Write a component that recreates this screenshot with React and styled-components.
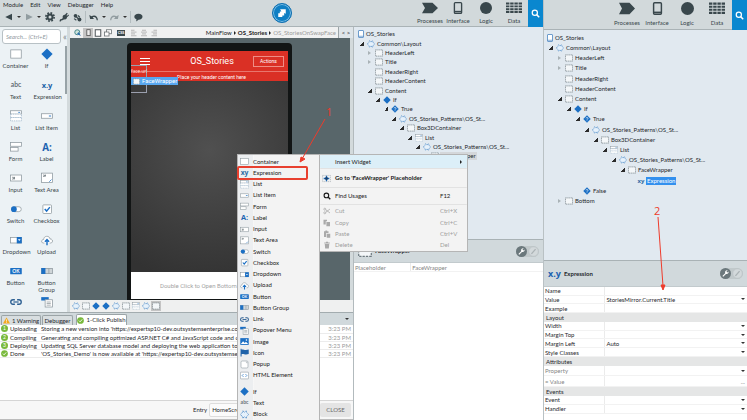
import React from "react";
import styled, { createGlobalStyle, css } from "styled-components";

const GlobalStyle = createGlobalStyle`
  * {
    box-sizing: border-box;
  }
  body {
    margin: 0;
    overflow: hidden;
    font-family: Lato, "Open Sans", sans-serif;
    font-size: 6px;
    line-height: 8px;
    color: #1f282c;
    background-color: #ffffff;
  }
  ul {
    list-style: none;
    margin: 0;
    padding: 0;
  }
  button, input, select {
    font: inherit;
    color: inherit;
    border: 0;
    margin: 0;
    padding: 0;
    background: none;
    border-radius: 0;
    min-width: 0;
  }
  button {
    cursor: pointer;
  }
  svg {
    display: block;
    flex: none;
  }
`;

/* ---------- icons ---------- */

const blue = "#1b6fc4";
const grey = "#8d989e";
const box = { fill: "#fff", stroke: grey, strokeWidth: 1 };

const shapes = {
  container: <rect x="1" y="2.5" width="14" height="11" {...box} />,
  placeholder: (
    <rect x="0.8" y="1.8" width="14.4" height="12.4" fill="#f4f7f9" stroke="#6d797f" strokeWidth="1.4" strokeDasharray="2.6 1.2" />
  ),
  if: <path d="M8 0.5L15.5 8L8 15.5L0.5 8Z" fill={blue} />,
  branch: (
    <>
      <path d="M8 0.5L15.5 8L8 15.5L0.5 8Z" fill={blue} />
      <path d="M6 6.5C6 4.5 10 4.5 10 6.5C10 8 8 8 8 9.5M8 11V12.3" fill="none" stroke="#fff" strokeWidth="1.3" />
    </>
  ),
  text: <text x="8" y="11" textAnchor="middle" fontSize="9" fontWeight="600" fill="#59656b">abc</text>,
  expression: <text x="8" y="11.5" textAnchor="middle" fontFamily="Open Sans" fontSize="10" fontWeight="700" fill="#2264a8">x.y</text>,
  exprSmall: <text x="8" y="12" textAnchor="middle" fontFamily="Open Sans" fontSize="12" fontWeight="700" fill="#2f6da6">xy</text>,
  list: (
    <>
      <rect x="0.8" y="1" width="14.4" height="4.5" {...box} />
      <rect x="0.8" y="5.5" width="14.4" height="4.5" {...box} stroke="#9fb6c9" strokeDasharray="2 1" />
      <rect x="0.8" y="10" width="14.4" height="4.5" {...box} stroke="#9fb6c9" strokeDasharray="2 1" />
      <path d="M11 3.2h2.5" stroke={blue} />
    </>
  ),
  listItem: (
    <>
      <rect x="0.8" y="5" width="14.4" height="6" {...box} />
      <path d="M10.5 8h3" stroke={blue} strokeWidth="1.2" />
    </>
  ),
  form: (
    <>
      <rect x="0.8" y="2" width="14.4" height="5" {...box} />
      <rect x="0.8" y="8.5" width="10" height="5" {...box} />
    </>
  ),
  label: <text x="8" y="13" textAnchor="middle" fontFamily="Open Sans" fontSize="13" fontWeight="700" fill="#1b62b0">A:</text>,
  input: (
    <>
      <rect x="0.8" y="4" width="14.4" height="8" {...box} />
      <path d="M3 9.5h1.5V7H3M6 9.8V6.5" fill="none" stroke="#59656b" />
    </>
  ),
  textArea: (
    <>
      <rect x="0.8" y="1.5" width="14.4" height="12.5" {...box} />
      <path d="M3 6h1.5V4H3M6 6V3.5" fill="none" stroke="#59656b" />
      <path d="M11 13l3-3" stroke={blue} />
    </>
  ),
  switch: (
    <>
      <rect x="2.5" y="5" width="12.5" height="6.5" rx="3.2" {...box} />
      <circle cx="5.2" cy="8.2" r="3.8" fill={blue} />
    </>
  ),
  checkbox: (
    <>
      <rect x="2.5" y="2.5" width="11.5" height="11.5" rx="1" {...box} />
      <path d="M5 8l2.5 2.8L11.8 5.5" fill="none" stroke={blue} strokeWidth="2" />
    </>
  ),
  dropdown: (
    <>
      <rect x="0.8" y="4.5" width="14.4" height="7.5" {...box} />
      <rect x="9" y="4" width="6.7" height="8.5" fill={blue} />
      <path d="M10.6 7h3.5l-1.7 2.3z" fill="#fff" />
    </>
  ),
  upload: (
    <>
      <path d="M4.5 12H3.2C-.2 12 .2 7.3 3.6 7.3C3.6 1.8 11.6 1.8 12 6.6C16.3 6.4 16.4 12 12.8 12H11.5" fill="#fff" stroke={grey} />
      <path d="M8 15V8M5.2 10.4L8 7.4L10.8 10.4" fill="none" stroke={blue} strokeWidth="1.9" />
    </>
  ),
  button: (
    <>
      <rect x="0.3" y="4" width="15.4" height="8.3" rx="0.8" fill={blue} />
      <text x="8" y="10.6" textAnchor="middle" fontSize="6.5" fontWeight="700" fill="#fff">OK</text>
    </>
  ),
  buttonGroup: (
    <>
      <rect x="0.8" y="4.5" width="14.4" height="7" fill="#cfd5d8" stroke={grey} />
      <rect x="0.4" y="4" width="5.5" height="8" fill={blue} />
      <path d="M10.5 4.5v7" stroke={grey} />
    </>
  ),
  link: (
    <>
      <path d="M6.5 11H4C0 11 0 5 4 5H6.5M9.5 5H12C16 5 16 11 12 11H9.5" fill="none" stroke="#2d5f92" strokeWidth="1.8" />
      <path d="M4.5 8h7" stroke="#2d5f92" strokeWidth="1.6" />
    </>
  ),
  popover: (
    <>
      <rect x="0.3" y="1.5" width="10" height="4.5" fill={blue} />
      <rect x="5.5" y="5" width="9.7" height="9.7" {...box} />
      <path d="M7.5 8h5.5M7.5 10h5.5M7.5 12.2h5.5" stroke={grey} />
    </>
  ),
  image: (
    <>
      <rect x="0.5" y="2" width="15" height="12" fill={blue} />
      <path d="M1.5 12.5L5.5 7.5L8.5 10.5L10.5 8.5L14.5 12.5Z" fill="#fff" />
      <circle cx="11.5" cy="5.3" r="1.4" fill="#fff" />
    </>
  ),
  flag: <path d="M1 1.5h1.8V3C5.5 1.5 7.5 4.8 15.5 2.8V10.8C8.5 13 6.5 9.5 2.8 11V15H1Z" fill="#1f63aa" />,
  popup: (
    <>
      <rect x="1.8" y="1.8" width="12.4" height="12.4" rx="2" {...box} />
      <path d="M10.5 3.8h2v2" fill="none" stroke={grey} />
    </>
  ),
  html: (
    <>
      <rect x="0.8" y="2" width="14.4" height="12" rx="1" {...box} />
      <path d="M6.3 5.5L3.8 8L6.3 10.5M9.7 5.5L12.2 8L9.7 10.5" fill="none" stroke={blue} strokeWidth="1.2" />
    </>
  ),
  block: (
    <path
      d="M5 1.5L8 4L11 1.5L12 4.5L15.3 8L12 11.5L11 14.5L8 12L5 14.5L4 11.5L0.7 8L4 4.5Z"
      fill="#e6f1fb" stroke="#3f82c4" strokeWidth="1.4" strokeDasharray="2.6 1"
    />
  ),
  screen: (
    <>
      <rect x="3" y="1" width="10" height="14" rx="1" fill="#fff" stroke="#4d87c2" strokeWidth="1.6" />
      <path d="M3.5 12.5h9" stroke="#4d87c2" strokeWidth="1.4" />
    </>
  ),
  goTo: (
    <>
      <rect x="1" y="2.5" width="14" height="11" fill="none" stroke={grey} strokeDasharray="2 1.4" />
      <path d="M8 3v10M3 8h10" stroke={blue} strokeWidth="2.4" />
      <path d="M8 4.5L11.5 8L8 11.5L4.5 8Z" fill="#17406f" />
    </>
  ),
  search: (
    <>
      <circle cx="6.8" cy="6.8" r="4.6" fill="none" stroke="currentColor" strokeWidth="2.2" />
      <path d="M10 10l4.6 4.6" stroke="currentColor" strokeWidth="2.6" />
    </>
  ),
  cut: (
    <>
      <path d="M5.5 5.5L14 12M5.5 10.5L14 4" stroke="#a9a9a9" strokeWidth="1.6" />
      <circle cx="3.6" cy="4.4" r="2" fill="none" stroke="#a9a9a9" strokeWidth="1.5" />
      <circle cx="3.6" cy="11.6" r="2" fill="none" stroke="#a9a9a9" strokeWidth="1.5" />
    </>
  ),
  copy: <path d="M1 1.5h7v3H5.5V11H1ZM6.8 6H14V14.5H6.8Z" fill="#a9a9a9" />,
  paste: <path d="M2 2.5h2.8V1h3.5V2.5H11V6H6.3V14H2ZM7.6 7.3H14.5V15.3H7.6Z" fill="#a9a9a9" />,
  trash: <path d="M2.5 3H6V1.3h4V3h3.5v1.8h-11ZM3.5 6h9l-.8 9.2H4.3Z" fill="#a9a9a9" />,
  back: <path d="M14 1.5V14.5L0.5 8Z" fill="currentColor" />,
  forward: <path d="M2 1.5V14.5L15.5 8Z" fill="currentColor" />,
  gear: (
    <>
      <circle cx="8" cy="8" r="6.6" fill="none" stroke="currentColor" strokeWidth="2.6" strokeDasharray="2.8 2.38" />
      <circle cx="8" cy="8" r="4" fill="none" stroke="currentColor" strokeWidth="3.2" />
    </>
  ),
  plug: <path d="M1 15C1 9 5 13 6 9C5 6 8 4 9.5 4.5L12.5 1L14 2.3L12 5L13 6L15.2 4L16 5.5L12.8 8.5C13 11 10.5 12.5 8 11.5C6 14.5 3.5 12 2.8 15Z" fill="currentColor" />,
  connect: (
    <>
      <circle cx="4.5" cy="5" r="3.3" fill="currentColor" />
      <circle cx="11.5" cy="11.5" r="3.5" fill="currentColor" />
      <path d="M4.5 5L11 12M9 4.5l3 3M2 10l4 3" stroke="currentColor" strokeWidth="2.2" />
    </>
  ),
  undo: <path d="M0.5 3.5L2 10.5H9L6.6 8C9.5 6.3 13 7.5 13.7 13H15.8C15.8 5 9.5 2.4 4.4 5.8Z" fill="currentColor" />,
  redo: <path d="M15.5 3.5L14 10.5H7L9.4 8C6.5 6.3 3 7.5 2.3 13H0.2C0.2 5 6.5 2.4 11.6 5.8Z" fill="currentColor" />,
  comment: <path d="M8 1.5C17.5 1.5 17.5 11.8 8 11.8L4 15.2L4.3 11.2C-2 8.5 0 1.5 8 1.5Z" fill="currentColor" />,
  zoomScreen: (
    <>
      <circle cx="6.5" cy="6.5" r="5" fill="#cfe4da" stroke="#3d7f83" strokeWidth="1.8" />
      <path d="M6 10l3-4 5 8" fill="#2f6fb0" />
    </>
  ),
  phoneSmall: <rect x="5" y="3" width="6" height="10.5" fill="#eee" stroke="#555" strokeWidth="1.5" />,
  tablet: <rect x="2.5" y="1.5" width="11" height="13" fill="#fff" stroke="#4f5659" strokeWidth="2" />,
  devices: (
    <>
      <rect x="5" y="1.5" width="10" height="8" fill="#fff" stroke="#62696c" strokeWidth="1.5" />
      <rect x="1" y="6" width="9" height="8" fill="#fff" stroke="#62696c" strokeWidth="1.5" />
    </>
  ),
  css: (
    <>
      <rect x="0" y="2" width="16" height="12" fill="#3c4a4e" />
      <text x="8" y="10.8" textAnchor="middle" fontSize="7.5" fontWeight="700" fill="#fff">CSS</text>
    </>
  ),
  alignLeft: <path d="M2 2.5h7M2 6.2h11M2 9.8h8M2 13.5h11" stroke="#a8a8a8" strokeWidth="1.6" />,
  alignCenter: <path d="M4 2.5h8M2 6.2h12M4 9.8h8M2 13.5h12" stroke="#a8a8a8" strokeWidth="1.6" />,
  alignRight: <path d="M7 2.5h7M3 6.2h11M6 9.8h8M3 13.5h11" stroke="#a8a8a8" strokeWidth="1.6" />,
  warning: (
    <>
      <path d="M8 1L16 15H0Z" fill="#f3a81c" />
      <path d="M8 5.5v5M8 12v1.6" stroke="#fff" strokeWidth="1.6" />
    </>
  ),
  done: (
    <>
      <circle cx="8" cy="8" r="7.7" fill="#79b93c" />
      <path d="M4.3 8.2l2.8 2.8L11.8 5.5" fill="none" stroke="#fff" strokeWidth="2" />
    </>
  ),
  processes: <path d="M0 1H10.5L16 8L10.5 15H0L3 8Z" fill="currentColor" />,
  interface: (
    <>
      <rect x="3.2" y="0.9" width="9.6" height="14.2" rx="1.2" fill="none" stroke="currentColor" strokeWidth="1.8" />
      <path d="M3.5 12.8h9" stroke="currentColor" strokeWidth="2" />
    </>
  ),
  logic: <circle cx="8" cy="8" r="8" fill="currentColor" />,
  data: <path d="M0 2h16M0 5.8h16M0 9.6h16M0 13.4h16" stroke="currentColor" strokeWidth="2.6" strokeDasharray="3.4 0.8" />,
};

const Icon = ({ name, size = 9, wide }) => (
  <svg
    width={wide || size}
    height={size}
    viewBox="0 0 16 16"
    preserveAspectRatio={wide ? "none" : undefined}
    aria-hidden="true"
  >
    {shapes[name]}
  </svg>
);

/* ---------- page ---------- */

const Page = styled.div`
  position: relative;
  display: grid;
  grid-template-columns: minmax(0, 543fr) minmax(0, 204fr);
  height: 100vh;
  overflow: hidden;
`;

const Window = styled.section`
  display: flex;
  flex-direction: column;
  min-width: 0;
  min-height: 0;
`;

const Header = styled.header`
  display: flex;
  justify-content: space-between;
  height: ${(props) => (props.$large ? 30 : 27)}px;
  flex: none;
  background-color: #d2d9db;
  border-bottom: 1px solid #aab3b6;
  ${(props) => props.$large && css`
    justify-content: flex-end;
    border-left: 1px solid #b9c1c4;
  `}
`;

const Commands = styled.div`
  flex: 0 0 50%;
  display: flex;
  flex-direction: column;
`;

const MenuBar = styled.nav`
  display: flex;
  gap: 7px;
  padding-left: 3px;
  height: 8px;
  line-height: 7px;
`;

const ToolBar = styled.div`
  display: flex;
  align-items: center;
  flex: 1;
  gap: 4px;
  padding-left: 5px;
  color: #39474c;
`;

const ToolButton = styled.button`
  display: flex;
  align-items: center;
  color: ${(props) => (props.$dim ? "#929da1" : "#39474c")};
`;

const Caret = styled.span`
  flex: none;
  border: 2px solid transparent;
  border-top-color: #333;
  border-bottom-width: 0;
`;

const Divider = styled.span`
  width: 1px;
  height: 12px;
  margin: 0 -1px;
  background-color: #b4bdc0;
`;

const Publish = styled.button`
  align-self: center;
  display: flex;
  align-items: center;
  justify-content: center;
  width: 20px;
  height: 20px;
  border-radius: 50%;
  border: 1px solid #0f6fb0;
  background-color: #0f7fc4;
  box-shadow: inset 0 0 0 1px #7fc0e6;
`;

const Modules = styled.nav`
  flex: ${(props) => (props.$large ? "none" : "1 1 0")};
  display: flex;
  justify-content: flex-end;
`;

const ModuleTab = styled.button`
  display: flex;
  flex-direction: column;
  align-items: center;
  justify-content: flex-start;
  width: ${(props) => (props.$large ? 30 : 28)}px;
  padding-top: 2px;
  gap: ${(props) => (props.$large ? 4 : 3)}px;
  color: #39474c;
  white-space: nowrap;
`;

const SearchTab = styled.button`
  display: flex;
  align-items: center;
  justify-content: center;
  width: 15px;
  margin-bottom: -1px;
  color: #fff;
  background-color: #0a87cf;
`;

const Columns = styled.div`
  display: flex;
  flex: 1;
  min-height: 0;
`;

const Main = styled.main`
  display: flex;
  flex-direction: column;
  flex: 1;
  min-width: 0;
  border-right: 1px solid #b2babd;
`;

const Workspace = styled.div`
  display: flex;
  flex: 1;
  min-height: 0;
`;

/* ---------- toolbox ---------- */

const Toolbox = styled.aside`
  width: 70px;
  flex: none;
  overflow: hidden;
  background-color: #ecf2f5;
  border-right: 3px solid #d3dadc;
`;

const SearchRow = styled.div`
  display: flex;
  align-items: center;
  gap: 2px;
  padding: 2px 0 0 2px;
`;

const SearchInput = styled.input`
  width: 59px;
  height: 15px;
  padding: 0 3px;
  border: 1px solid #b8c1c5;
  border-radius: 3px;
  background-color: #fff;
  font-style: italic;
  &::placeholder {
    color: #8f999d;
  }
`;

const Collapse = styled.button`
  font-size: 9px;
  color: #7d878b;
`;

const WidgetArea = styled.div`
  display: flex;
  align-items: flex-start;
  padding-top: 2px;
`;

const WidgetGrid = styled.ul`
  display: grid;
  grid-template-columns: 31px 31px;
  grid-auto-rows: 31px;
  width: 65px;
`;

const Widget = styled.button`
  display: flex;
  flex-direction: column;
  align-items: center;
  gap: 1px;
  width: 100%;
  padding-top: 2px;
  line-height: 7px;
  white-space: ${(props) => (props.$wrap ? "normal" : "nowrap")};
  color: #3a464b;
  svg {
    margin-bottom: 1px;
  }
`;

const WidgetName = styled.span`
  max-width: 26px;
`;

const ScrollThumb = styled.div`
  width: 2px;
  height: 48px;
  background-color: #98a3a7;
`;

/* ---------- canvas ---------- */

const Editor = styled.div`
  display: flex;
  flex-direction: column;
  flex: 1;
  min-width: 0;
  background-color: #d3dadc;
`;

const EditorBar = styled.div`
  display: flex;
  align-items: center;
  height: 11px;
  flex: none;
  background-color: #f0f1f1;
`;

const EditorTool = styled.button`
  display: flex;
  align-items: center;
  justify-content: center;
  width: 10px;
  height: 10px;
  background-color: ${(props) => (props.$active ? "#c4c4c4" : "transparent")};
`;

const Gap = styled.span`
  width: 3px;
`;

const Crumbs = styled.nav`
  display: flex;
  align-items: center;
  justify-content: flex-end;
  gap: 2px;
  flex: 1;
  padding-right: 2px;
  white-space: nowrap;
`;

const Crumb = styled.a`
  color: ${(props) => (props.$dim ? "#9c9c9c" : "#222")};
  font-weight: ${(props) => (props.$current ? 700 : 400)};
  text-decoration: none;
`;

const CrumbArrow = styled.span`
  border: 2px solid transparent;
  border-left-color: #222;
  border-right-width: 0;
`;

const CodeTab = styled.button`
  align-self: stretch;
  width: 15px;
  border-left: 1px solid #9ca5a8;
  background-color: #dfe5e9;
`;

const Canvas = styled.div`
  flex: 1;
  min-height: 0;
  margin-right: 3px;
  padding: 5px 0 0 57px;
  background-color: #58666a;
`;

const Phone = styled.div`
  display: flex;
  width: 165px;
  height: 100%;
  padding: 8px 4px 1px;
  border-radius: 4px 4px 0 0;
  background-color: #121515;
`;

const Screen = styled.div`
  position: relative;
  display: flex;
  flex-direction: column;
  flex: 1;
  background: radial-gradient(circle at 50% 40%, #505050, #323232 80%);
`;

const AppHeader = styled.div`
  display: grid;
  grid-template-columns: 1fr auto 1fr;
  align-items: center;
  height: 20px;
  padding: 0 4px 0 9px;
  color: #fff;
  background-color: #da3025;
`;

const AppTitle = styled.h1`
  margin: 0;
  font-family: Roboto, sans-serif;
  font-size: 9px;
  line-height: 10px;
  font-weight: 400;
`;

const Hamburger = styled.button`
  width: 10px;
  height: 7px;
  border: solid #fff;
  border-width: 1px 0;
  background: linear-gradient(#fff, #fff) center / 100% 1px no-repeat;
`;

const ActionsButton = styled.button`
  justify-self: end;
  width: 31px;
  height: 11px;
  border: 1px solid #ee8d85;
  font-family: Roboto, sans-serif;
  font-size: 5px;
`;

const AppSubheader = styled.div`
  height: 10px;
  padding-left: 4px;
  border-top: 1px solid #e8766d;
  font-family: Roboto, sans-serif;
  font-size: 5px;
  line-height: 10px;
  text-align: center;
  color: #fff;
  background-color: #da3025;
`;

const AppBottom = styled.div`
  margin-top: auto;
  padding-left: 29px;
  height: 27px;
  line-height: 27px;
  white-space: nowrap;
  overflow: hidden;
  font-family: Roboto, sans-serif;
  color: #a3a3a3;
  background-color: #fff;
`;

/* selection frame drawn over the phone screen */
const Selection = styled.div`
  position: absolute;
  left: 0;
  top: 14px;
  width: 16px;
  height: 28px;
  border: 1px solid #9b9fae;
  border-left: 0;
  padding-top: 2px;
  font-size: 5px;
  line-height: 6px;
  white-space: nowrap;
  color: #fbd9d6;
`;

const SelectionTag = styled.div`
  position: absolute;
  left: 0;
  top: 26px;
  display: flex;
  align-items: center;
  gap: 2px;
  height: 8px;
  padding: 0 1px 0 2px;
  font-family: Roboto, sans-serif;
  color: #fff;
  background-color: #58a6ef;
`;

const PathBar = styled.div`
  display: flex;
  align-items: center;
  height: 12px;
  flex: none;
  padding-left: 1px;
  background-color: #eff0f0;
`;

/* ---------- publish panel ---------- */

const Output = styled.section`
  display: flex;
  flex-direction: column;
  height: 108px;
  flex: none;
  border-bottom: 1px solid #bcbcbc;
`;

const Tabs = styled.div`
  display: flex;
  align-items: flex-end;
  gap: 1px;
  height: 13px;
  flex: none;
  padding: 0 4px 0 1px;
  border-top: 1px solid #a3acaf;
  background-color: #d1d9dc;
`;

const Tab = styled.button`
  display: flex;
  align-items: center;
  justify-content: center;
  gap: 2px;
  width: ${(props) => props.$width}px;
  height: ${(props) => (props.$active ? 11 : 10)}px;
  border: 1px solid #9ba4a7;
  border-bottom: 0;
  border-radius: 2px 2px 0 0;
  margin-left: ${(props) => (props.$active ? 2 : 0)}px;
  white-space: nowrap;
  background-color: ${(props) => (props.$active ? "#fff" : "#d8dee0")};
`;

const TabsMenu = styled.button`
  display: flex;
  align-self: center;
  margin-left: auto;
`;

const LogTable = styled.table`
  table-layout: fixed;
  width: 100%;
  border-collapse: collapse;
  background-color: #fff;
  tr {
    height: 8px;
  }
  td {
    padding: 0;
    line-height: 7px;
    white-space: nowrap;
    overflow: hidden;
    border-bottom: 1px solid #ececec;
  }
`;

const Step = styled.span`
  display: flex;
  align-items: center;
  gap: 2px;
  padding-left: 1px;
`;

const Bullet = styled.span`
  width: 7px;
  height: 7px;
  border-radius: 50%;
  font-size: 5px;
  line-height: 7px;
  text-align: center;
  color: #fff;
  background-color: #79b93c;
`;

const Time = styled.td`
  text-align: right;
  padding-right: 2px !important;
  color: #9b9b9b;
`;

const Footer = styled.footer`
  display: flex;
  align-items: center;
  gap: 2px;
  height: 19px;
  margin-top: auto;
  padding: 0 2px 0 193px;
  border-top: 1px solid #d5d5d5;
  background-color: #f7f7f7;
`;

const EntrySelect = styled.select`
  appearance: none;
  flex: 1;
  height: 14px;
  padding-left: 2px;
  border: 1px solid #dddddd;
  border-radius: 2px;
  background-color: #fbfbfb;
`;

const CloseButton = styled.button`
  width: 31px;
  height: 14px;
  border-radius: 2px;
  color: #6b6b6b;
  background-color: #e4e4e4;
`;

/* ---------- element tree ---------- */

const Side = styled.aside`
  display: flex;
  flex-direction: column;
  width: ${(props) => (props.$large ? "100%" : "189px")};
  flex: none;
  border-left: ${(props) => (props.$large ? "1px solid #b9c1c4" : "0")};
`;

const TreePane = styled.div`
  flex: ${(props) => (props.$large ? "0 0 230px" : "0 0 212px")};
  padding: ${(props) => (props.$large ? "4px 0 0 2px" : "3px 0 0 3px")};
  background-color: #e1e9f0;
`;

const TreeTitle = styled.div`
  display: flex;
  align-items: center;
  gap: 1px;
`;

const Tree = styled.ul`
  display: flex;
  flex-direction: column;
  min-height: ${(props) => props.$height}px;
  margin-top: 1px;
`;

const TreeItem = styled.li`
  display: flex;
  align-items: center;
  flex: 1;
  gap: 1px;
  padding-left: ${(props) => props.$depth * (props.$large ? 9 : 8) + 3}px;
  white-space: nowrap;
`;

const Twisty = styled.span`
  display: block;
  width: 4px;
  height: 4px;
  margin-right: 2px;
  ${(props) => props.$state === "open" && css`
    background: linear-gradient(135deg, transparent 50%, #2b2b2b 50%);
  `}
  ${(props) => props.$state === "closed" && css`
    width: 0;
    height: 0;
    margin-right: 3px;
    border: 2px solid transparent;
    border-left: 3px solid #a9b2b6;
    border-right: 0;
  `}
`;

const Node = styled.span`
  padding: 0 1px;
  background-color: ${(props) => props.$mark || "transparent"};
  color: ${(props) => (props.$mark === "#3390ee" ? "#fff" : "inherit")};
`;

/* ---------- properties ---------- */

const PropHeader = styled.div`
  display: flex;
  align-items: center;
  gap: 3px;
  height: ${(props) => (props.$large ? 27 : 24)}px;
  flex: none;
  padding: 0 4px;
  border-top: 1px solid #a9b2b5;
  border-bottom: 1px solid #c2cacd;
  font-weight: 700;
  background-color: #d1d9dc;
`;

const ExprMark = styled.span`
  font-family: "Open Sans", sans-serif;
  font-size: 9px;
  line-height: 12px;
  font-weight: 700;
  color: #1b62b0;
`;

const Toggle = styled.button`
  display: flex;
  align-items: center;
  justify-content: space-between;
  width: 23px;
  height: 11px;
  margin-left: auto;
  border-radius: 6px;
  background-color: #c1c9cb;
`;

const PropTable = styled.table`
  table-layout: fixed;
  width: 100%;
  height: ${(props) => props.$height}px;
  border-collapse: collapse;
  background-color: #fff;
  color: ${(props) => (props.$dim ? "#858585" : "inherit")};
  th, td {
    padding: 0 1px;
    line-height: 7px;
    text-align: left;
    font-weight: 400;
    white-space: nowrap;
    border-bottom: 1px solid #f2f2f2;
  }
  th {
    border-right: 1px solid #ebebeb;
  }
`;

const PropGroup = styled.h2`
  margin: 0;
  padding-left: 2px;
  height: 9px;
  font-size: 6px;
  line-height: 9px;
  font-weight: 400;
  background-color: #e5e6e6;
`;

const Field = styled.div`
  display: flex;
  align-items: center;
  gap: 2px;
  padding-right: 1px;
  input {
    flex: 1;
    height: 7px;
    line-height: 7px;
  }
  button {
    display: flex;
    align-items: center;
    height: 7px;
  }
`;

/* ---------- menus over the page ---------- */

const Popup = styled.div`
  position: absolute;
  display: flex;
  flex-direction: column;
  border: 1px solid #b5b5b5;
  background-color: #f3f3f3;
`;

const WidgetMenu = styled(Popup)`
  left: 237px;
  top: 154px;
  width: 83px;
  bottom: 0;
  padding-top: 1px;
  border-bottom: 0;
  background: linear-gradient(to right, #eceef0 15px, #fafafa 15px, #f3f3f3 16px);
`;

const MenuGroup = styled.ul`
  display: flex;
  flex-direction: column;
  height: ${(props) => props.$height}px;
  flex: none;
  margin-bottom: ${(props) => props.$after || 0}px;
  li {
    display: flex;
    flex: 1;
    min-height: 0;
  }
`;

const MenuItem = styled.button`
  display: flex;
  align-items: center;
  flex: 1;
  gap: 4px;
  padding: 0 10px 0 2px;
  text-align: left;
  white-space: nowrap;
  font-weight: ${(props) => (props.$bold ? 700 : 400)};
  color: ${(props) => (props.disabled ? "#9d9d9d" : "#1a1a1a")};
  outline: ${(props) => (props.$boxed ? "2px solid #e8402f" : "0")};
  outline-offset: -1px;
  margin-right: ${(props) => (props.$boxed ? 12 : 0)}px;
  border-radius: 1px;
`;

const ContextMenu = styled(Popup)`
  left: 319px;
  top: 154px;
  width: 149px;
  padding-bottom: 1px;
`;

const ContextRow = styled(MenuItem)`
  flex: none;
  width: 100%;
  height: ${(props) => props.$height || 11}px;
  gap: 4px;
  padding: 0 5px 0 2px;
  border-top: ${(props) => (props.$line ? "1px solid #e2e2e2" : "0")};
  background-color: ${(props) => (props.$hot ? "#dceff8" : "transparent")};
`;

const Shortcut = styled.span`
  width: 22px;
  margin-left: auto;
`;

const IconSlot = styled.span`
  display: flex;
  justify-content: center;
  width: 9px;
`;

const MenuArrow = styled(CrumbArrow)`
  margin-left: auto;
`;

const Notes = styled.svg`
  position: absolute;
  left: 0;
  top: 0;
  pointer-events: none;
`;

/* ---------- data ---------- */

const widgets = [
  ["container", "Container"],
  ["if", "If"],
  ["text", "Text"],
  ["expression", "Expression"],
  ["list", "List"],
  ["listItem", "List Item"],
  ["form", "Form"],
  ["label", "Label"],
  ["input", "Input"],
  ["textArea", "Text Area"],
  ["switch", "Switch"],
  ["checkbox", "Checkbox"],
  ["dropdown", "Dropdown"],
  ["upload", "Upload"],
  ["button", "Button"],
  ["buttonGroup", "Button Group"],
  ["link", "Link"],
  ["popover", "Popover Menu"],
];

const insertItems = [
  ["container", "Container"],
  ["exprSmall", "Expression"],
  ["list", "List"],
  ["listItem", "List Item"],
  ["form", "Form"],
  ["label", "Label"],
  ["input", "Input"],
  ["textArea", "Text Area"],
  ["switch", "Switch"],
  ["checkbox", "Checkbox"],
  ["dropdown", "Dropdown"],
  ["upload", "Upload"],
  ["button", "Button"],
  ["buttonGroup", "Button Group"],
  ["link", "Link"],
  ["popover", "Popover Menu"],
  ["image", "Image"],
  ["flag", "Icon"],
  ["popup", "Popup"],
  ["html", "HTML Element"],
];

const logicItems = [
  ["if", "If"],
  ["text", "Text"],
  ["block", "Block"],
];

const tree = [
  [0, "open", "block", "Common\\Layout"],
  [1, "closed", "placeholder", "HeaderLeft"],
  [1, "closed", "placeholder", "Title"],
  [1, "", "placeholder", "HeaderRight"],
  [1, "", "placeholder", "HeaderContent"],
  [1, "open", "placeholder", "Content"],
  [2, "open", "if", "If"],
  [3, "open", "branch", "True"],
  [4, "open", "block", "OS_Stories_Patterns\\OS_St..."],
  [5, "open", "placeholder", "Box3DContainer"],
  [6, "open", "list", "List"],
  [7, "open", "block", "OS_Stories_Patterns\\OS_St..."],
];

const smallTree = [...tree, [8, "", "placeholder", "FaceWrapper", "#d4d7da"]];

const largeTree = [
  ...tree,
  [8, "open", "placeholder", "FaceWrapper"],
  [9, "", "exprSmall", "Expression", "#3390ee"],
  [3, "", "branch", "False"],
  [1, "closed", "placeholder", "Bottom"],
];

const log = [
  ["1", "Uploading", "Storing a new version into 'https://expertsp10-dev.outsystemsenterprise.com/S"],
  ["2", "Compiling", "Generating and compiling optimized ASP.NET C# and JavaScript code and creat"],
  ["3", "Deploying", "Updating SQL Server database model and deploying the web application to IIS."],
  ["", "Done", "'OS_Stories_Demo' is now available at 'https://expertsp10-dev.outsystemsenterp"],
];

const pathIcons = ["block", "placeholder", "if", "if", "block", "placeholder", "list", "block", "placeholder"];

/* ---------- components ---------- */

const ModuleTabs = ({ large }) => (
  <Modules $large={large}>
    {["Processes", "Interface", "Logic", "Data"].map((name) => (
      <ModuleTab key={name} $large={large}>
        <Icon
          name={name.toLowerCase()}
          size={large ? 13 : 12}
          wide={name === "Processes" || name === "Data" ? 16 : large ? 13 : 12}
        />
        {name}
      </ModuleTab>
    ))}
    <SearchTab aria-label="Search">
      <Icon name="search" size={9} />
    </SearchTab>
  </Modules>
);

const ElementTree = ({ nodes, height, large }) => (
  <TreePane $large={large}>
    <TreeTitle>
      <Icon name="screen" size={8} />
      OS_Stories
    </TreeTitle>
    <Tree $height={height}>
      {nodes.map(([depth, state, icon, name, mark], i) => (
        <TreeItem key={i} $depth={depth} $large={large}>
          <Twisty $state={state} />
          <Icon name={icon} size={8} />
          <Node $mark={mark}>{name}</Node>
        </TreeItem>
      ))}
    </Tree>
  </TreePane>
);

const WrenchToggle = () => (
  <Toggle aria-label="Styles">
    <svg width="11" height="11" viewBox="0 0 16 16" aria-hidden="true">
      <circle cx="8" cy="8" r="8" fill="#6b787c" />
      <path d="M3.5 11.5L7.5 7.5C6.8 5 8.8 3 11 3.5L9.3 5.3L10.7 6.7L12.5 5C13 7.2 11 9.2 8.7 8.6L4.7 12.7Z" fill="#fff" />
    </svg>
    <svg width="11" height="11" viewBox="0 0 16 16" aria-hidden="true">
      <circle cx="8" cy="8" r="7" fill="#d3d9db" stroke="#b9c1c3" />
      <path d="M5 11.5L11 4.5" stroke="#aab2b5" strokeWidth="1.8" />
    </svg>
  </Toggle>
);

const PropRows = ({ rows, height, dim }) => (
  <PropTable $height={height} $dim={dim}>
    <colgroup>
      <col width="30%" />
      <col />
    </colgroup>
    <tbody>
      {rows.map(([name, value, more]) => (
        <tr key={name}>
          <th scope="row">
            <label htmlFor={"prop-" + name}>{name}</label>
          </th>
          <td>
            <Field>
              <input id={"prop-" + name} defaultValue={value} />
              {more && (
                <button aria-label={"Choose " + name}>{more === "dots" ? "..." : <Caret />}</button>
              )}
            </Field>
          </td>
        </tr>
      ))}
    </tbody>
  </PropTable>
);

const MenuList = ({ items, height, after }) => (
  <MenuGroup $height={height} $after={after}>
    {items.map(([icon, name]) => (
      <li key={name}>
        <MenuItem $boxed={name === "Expression"}>
          <Icon name={icon} size={9} />
          {name}
        </MenuItem>
      </li>
    ))}
  </MenuGroup>
);

class StudioWindow extends React.Component {
  renderHeader() {
    return (
      <Header>
        <Commands>
          <MenuBar>
            {["Module", "Edit", "View", "Debugger", "Help"].map((name) => (
              <button key={name}>{name}</button>
            ))}
          </MenuBar>
          <ToolBar>
            <ToolButton aria-label="Back"><Icon name="back" size={8} /></ToolButton>
            <Caret />
            <ToolButton $dim aria-label="Forward"><Icon name="forward" size={8} /></ToolButton>
            <Caret />
            <ToolButton aria-label="Settings"><Icon name="gear" size={10} /></ToolButton>
            <ToolButton aria-label="Integrations"><Icon name="plug" size={10} /></ToolButton>
            <ToolButton aria-label="Dependencies"><Icon name="connect" size={9} /></ToolButton>
            <Divider />
            <ToolButton aria-label="Undo"><Icon name="undo" size={9} /></ToolButton>
            <Caret />
            <ToolButton $dim aria-label="Redo"><Icon name="redo" size={9} /></ToolButton>
            <Caret />
            <Divider />
            <ToolButton aria-label="Feedback"><Icon name="comment" size={9} /></ToolButton>
          </ToolBar>
        </Commands>
        <Publish aria-label="Publish">
          <svg width="10" height="10" viewBox="0 0 16 16" aria-hidden="true">
            <path d="M5 2H14V9L11.5 8V12H8.5V14.5H2V8.5H4.5V5.5H7Z" fill="#fff" />
          </svg>
        </Publish>
        <ModuleTabs />
      </Header>
    );
  }

  renderToolbox() {
    return (
      <Toolbox>
        <SearchRow>
          <SearchInput aria-label="Search widgets" placeholder="Search... (Ctrl+E)" />
          <Collapse aria-label="Collapse">«</Collapse>
        </SearchRow>
        <WidgetArea>
          <WidgetGrid>
            {widgets.map(([icon, name]) => (
              <li key={name}>
                <Widget $wrap={name.length > 11}>
                  <Icon name={icon} size={12} />
                  <WidgetName>{name}</WidgetName>
                </Widget>
              </li>
            ))}
          </WidgetGrid>
          <ScrollThumb />
        </WidgetArea>
      </Toolbox>
    );
  }

  renderEditor() {
    return (
      <Editor>
        <EditorBar>
          <Gap />
          <EditorTool aria-label="Preview"><Icon name="zoomScreen" size={8} /></EditorTool>
          <EditorTool $active aria-label="Phone"><Icon name="phoneSmall" size={9} /></EditorTool>
          <EditorTool aria-label="Tablet"><Icon name="tablet" size={8} /></EditorTool>
          <EditorTool aria-label="Devices"><Icon name="devices" size={8} /></EditorTool>
          <Gap />
          <EditorTool aria-label="Style sheet"><Icon name="css" size={8} /></EditorTool>
          <Gap />
          <EditorTool aria-label="Align left"><Icon name="alignLeft" size={8} /></EditorTool>
          <EditorTool aria-label="Align center"><Icon name="alignCenter" size={8} /></EditorTool>
          <EditorTool aria-label="Align right"><Icon name="alignRight" size={8} /></EditorTool>
          <Crumbs>
            <Crumb href="#flow">MainFlow</Crumb>
            <CrumbArrow />
            <Crumb $current href="#screen">OS_Stories</Crumb>
            <CrumbArrow />
            <Crumb $dim href="#action">OS_StoriesOnSwapFace</Crumb>
          </Crumbs>
          <CodeTab>&lt; &gt;</CodeTab>
        </EditorBar>
        <Canvas>
          <Phone>
            <Screen>
              <AppHeader>
                <Hamburger aria-label="Menu" />
                <AppTitle>OS_Stories</AppTitle>
                <ActionsButton>Actions</ActionsButton>
              </AppHeader>
              <AppSubheader>Place your header content here</AppSubheader>
              <AppBottom>Double Click to Open Bottom Bar</AppBottom>
              <Selection>face.url</Selection>
              <SelectionTag>
                <Icon name="placeholder" size={7} />
                FaceWrapper
              </SelectionTag>
            </Screen>
          </Phone>
        </Canvas>
        <PathBar>
          {pathIcons.map((name, i) => (
            <EditorTool key={i} $active={i === 8} aria-label={name}>
              <Icon name={name} size={8} />
            </EditorTool>
          ))}
        </PathBar>
      </Editor>
    );
  }

  renderOutput() {
    return (
      <Output>
        <Tabs>
          <Tab $width={40}><Icon name="warning" size={7} />1 Warning</Tab>
          <Tab $width={31}>Debugger</Tab>
          <Tab $width={51} $active><Icon name="done" size={7} />1-Click Publish</Tab>
          <TabsMenu aria-label="Panel menu"><Caret /></TabsMenu>
        </Tabs>
        <LogTable>
          <colgroup>
            <col width="41" />
            <col />
            <col width="30" />
          </colgroup>
          <tbody>
            {log.map(([step, name, message]) => (
              <tr key={name}>
                <td>
                  <Step>
                    {step ? <Bullet>{step}</Bullet> : <Icon name="done" size={7} />}
                    {name}
                  </Step>
                </td>
                <td>{message}</td>
                <Time>3:23 PM</Time>
              </tr>
            ))}
          </tbody>
        </LogTable>
        <Footer>
          <label htmlFor="entry">Entry</label>
          <EntrySelect id="entry">
            <option>HomeScreen</option>
          </EntrySelect>
          <CloseButton>CLOSE</CloseButton>
        </Footer>
      </Output>
    );
  }

  render() {
    return (
      <Window>
        {this.renderHeader()}
        <Columns>
          <Main>
            <Workspace>
              {this.renderToolbox()}
              {this.renderEditor()}
            </Workspace>
            {this.renderOutput()}
          </Main>
          <Side>
            <ElementTree nodes={smallTree} height={122} />
            <PropHeader>
              <Icon name="placeholder" size={14} />
              FaceWrapper
              <WrenchToggle />
            </PropHeader>
            <PropRows rows={[["Placeholder", "FaceWrapper"]]} height={9} dim />
          </Side>
        </Columns>
      </Window>
    );
  }
}

const DetailWindow = () => (
  <Window>
    <Header $large>
      <ModuleTabs large />
    </Header>
    <Columns>
      <Side $large>
        <ElementTree nodes={largeTree} height={163} large />
        <PropHeader $large>
          <ExprMark>x.y</ExprMark>
          Expression
          <WrenchToggle />
        </PropHeader>
        <PropRows
          height={26}
          rows={[
            ["Name", ""],
            ["Value", "StoriesMirror.Current.Title", "caret"],
            ["Example", ""],
          ]}
        />
        <PropGroup>Layout</PropGroup>
        <PropRows
          height={35}
          rows={[
            ["Width", "", "caret"],
            ["Margin Top", "", "caret"],
            ["Margin Left", "Auto", "caret"],
            ["Style Classes", "", "caret"],
          ]}
        />
        <PropGroup>Attributes</PropGroup>
        <PropRows
          dim
          height={21}
          rows={[
            ["Property", "", "caret"],
            ["= Value", "", "dots"],
          ]}
        />
        <PropGroup>Events</PropGroup>
        <PropRows
          height={18}
          rows={[
            ["Event", "", "caret"],
            ["Handler", "", "caret"],
          ]}
        />
      </Side>
    </Columns>
  </Window>
);

const App = () => (
  <>
    <GlobalStyle />
    <Page>
      <StudioWindow />
      <DetailWindow />

      <ContextMenu>
        <ContextRow $hot $height={13}>
          <IconSlot />
          Insert Widget
          <MenuArrow />
        </ContextRow>
        <ContextRow $bold $line $height={19}>
          <IconSlot><Icon name="goTo" size={9} /></IconSlot>
          Go to 'FaceWrapper' Placeholder
        </ContextRow>
        <ContextRow $line $height={17}>
          <IconSlot><Icon name="search" size={8} /></IconSlot>
          Find Usages
          <Shortcut>F12</Shortcut>
        </ContextRow>
        <ContextRow disabled $line $height={13}>
          <IconSlot><Icon name="cut" size={8} /></IconSlot>
          Cut
          <Shortcut>Ctrl+X</Shortcut>
        </ContextRow>
        <ContextRow disabled>
          <IconSlot><Icon name="copy" size={8} /></IconSlot>
          Copy
          <Shortcut>Ctrl+C</Shortcut>
        </ContextRow>
        <ContextRow disabled>
          <IconSlot><Icon name="paste" size={8} /></IconSlot>
          Paste
          <Shortcut>Ctrl+V</Shortcut>
        </ContextRow>
        <ContextRow disabled>
          <IconSlot><Icon name="trash" size={8} /></IconSlot>
          Delete
          <Shortcut>Del</Shortcut>
        </ContextRow>
      </ContextMenu>

      <WidgetMenu>
        <MenuList items={insertItems} height={225} after={5} />
        <MenuList items={logicItems} height={34} />
      </WidgetMenu>

      <Notes width="747" height="420" viewBox="0 0 747 420" fontFamily="Open Sans">
        <g stroke="#ee3b2b" strokeWidth="1" fill="#ee3b2b">
          <path d="M325 119L302 159" />
          <path d="M300 162L301 157L305 159Z" />
          <path d="M658 217L663 286" />
          <path d="M663 290L661 285H665Z" />
        </g>
        <text x="326" y="116" fontSize="11" fill="#ee3b2b">1</text>
        <text x="654" y="215" fontSize="11" fill="#ee3b2b">2</text>
      </Notes>
    </Page>
  </>
);

export default App;
